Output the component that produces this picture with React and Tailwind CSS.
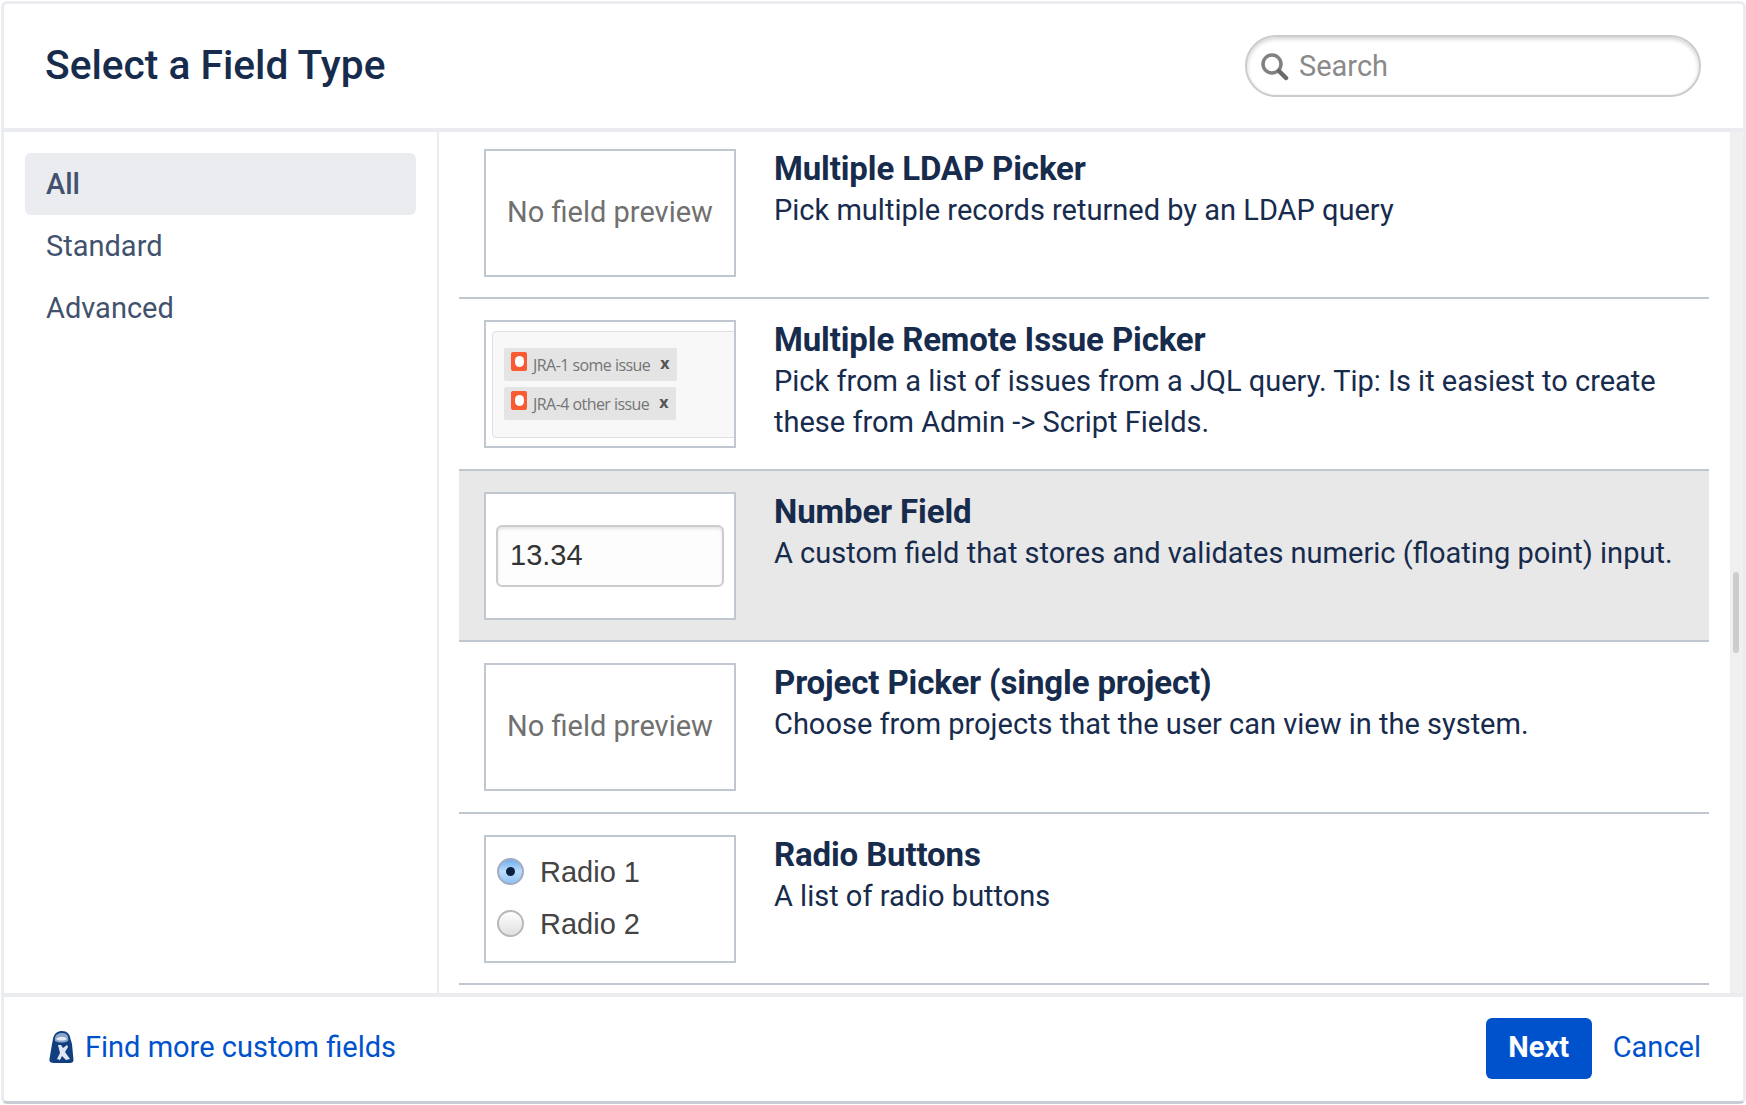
import React from 'react';

const rows = [
  { title: 'Multiple LDAP Picker', desc: 'Pick multiple records returned by an LDAP query', preview: 'none' },
  { title: 'Multiple Remote Issue Picker', desc: 'Pick from a list of issues from a JQL query. Tip: Is it easiest to create these from Admin -> Script Fields.', preview: 'tags' },
  { title: 'Number Field', desc: 'A custom field that stores and validates numeric (floating point) input.', preview: 'number', selected: true },
  { title: 'Project Picker (single project)', desc: 'Choose from projects that the user can view in the system.', preview: 'none' },
  { title: 'Radio Buttons', desc: 'A list of radio buttons', preview: 'radio' },
];

function SearchIcon() {
  return (
    <svg width="29" height="29" viewBox="0 0 29 29" className="shrink-0">
      <circle cx="12" cy="12" r="9" fill="#fff" stroke="#808080" strokeWidth="3.5" />
      <path d="M19 19 L26 26" stroke="#6a6a6a" strokeWidth="4.5" strokeLinecap="round" />
    </svg>
  );
}

function MarketIcon() {
  return (
    <svg width="25" height="34" viewBox="0 0 25 34" className="shrink-0 -mt-[3px]">
      <path d="M4 9 C5 3 9 1 13 1 C18 1 21 4 21.5 9 L23 14 L24.5 30 C24.5 32 23 33 21 33 L6 33 C2 33 0 32 0.5 29 L3 14 Z" fill="#123f80" />
      <path d="M6 11 C5 5 9 3 13 3 C18 3 20 6 19 11 C15 13 10 13 6 11 Z" fill="#8ba6ca" />
      <path d="M7 9 C10 6 16 6 18 9 C15 11 10 11 7 9 Z" fill="#e3eaf4" />
      <path d="M9 15 L12 15 L14 18 L18 15 L19 17 L16 22 L21 29 L17 30 L13 26 L11 30 L8 29 L11 23 Z" fill="#dfe7f2" />
    </svg>
  );
}

function Tag({ label, width }) {
  return (
    <div className={`flex items-center h-[33px] bg-[#e4e4e4] rounded-[2px] pl-[7px] font-['Open_Sans',sans-serif] text-[16px] tracking-[-0.55px] text-[#757575] ${width}`}>
      <span className="flex items-center justify-center w-[16px] h-[19px] -mt-[7px] rounded-[2px] bg-[#fa5a32]">
        <span className="w-[9px] h-[11px] rounded-full bg-white" />
      </span>
      <span className="ml-[6px] whitespace-nowrap">{label}</span>
      <span className="ml-auto mr-[8px] font-bold text-[16px] text-[#555] -mt-[3px]">x</span>
    </div>
  );
}

function Radio({ on }) {
  if (on) {
    return (
      <span className="flex items-center justify-center w-[27px] h-[27px] rounded-full border-2 border-[#a3acc0] bg-linear-to-b from-[#6fb0f0] via-[#bcdcfb] to-[#8cc4f6]">
        <span className="w-[9px] h-[9px] rounded-full bg-[#0b1f3f]" />
      </span>
    );
  }
  return <span className="w-[27px] h-[27px] rounded-full border-2 border-[#b8b8b8] bg-linear-to-b from-white to-[#e0e0e0]" />;
}

function Preview({ kind }) {
  return (
    <div className="relative shrink-0 w-[252px] h-[128px] box-border border-2 border-[#c1c7d0] bg-white overflow-hidden">
      {kind === 'none' && (
        <div className="flex items-center justify-center h-full text-[29px] text-[#707070]">No field preview</div>
      )}
      {kind === 'tags' && (
        <div className="ml-[6px] mt-[9px] h-[107px] w-[250px] box-border border border-[#dfdfdf] rounded-[4px] bg-[#f8f8f8] pl-[11px] pt-[16px] flex flex-col gap-[6px]">
          <Tag label="JRA-1 some issue" width="w-[173px]" />
          <Tag label="JRA-4 other issue" width="w-[172px]" />
        </div>
      )}
      {kind === 'number' && (
        <div className="flex items-center h-full pl-[10px]">
          <div className="flex items-center w-[228px] h-[62px] box-border border-2 border-[#cccccc] rounded-[6px] bg-[#fdfdfd] shadow-[inset_0_2px_3px_rgba(0,0,0,0.1)] pl-[12px] font-['Liberation_Sans',sans-serif] text-[29px] text-[#333]">
            13.34
          </div>
        </div>
      )}
      {kind === 'radio' && (
        <div className="flex flex-col gap-[25px] pl-[11px] pt-[21px] font-['Liberation_Sans',sans-serif] text-[29px] text-[#444]">
          <div className="flex items-center gap-[16px] h-[27px]"><Radio on /><span className="mt-[3px]">Radio 1</span></div>
          <div className="flex items-center gap-[16px] h-[27px]"><Radio /><span className="mt-[3px]">Radio 2</span></div>
        </div>
      )}
    </div>
  );
}

export default function App() {
  return (
    <div className="w-[1746px] h-[1105px] bg-white pt-px pl-px pb-px overflow-hidden font-['Roboto',sans-serif]">
      <div className="flex flex-col h-full box-border border-[3px] border-[#ebecf0] border-b-[#c8ccd4] rounded-[6px] bg-white">
        {/* Header */}
        <div className="flex items-center justify-between h-[128px] shrink-0 pl-[41px] pr-[42px] border-b-4 border-[#ebecf0]">
          <h1 className="text-[40.7px] font-medium text-[#172b4d]">Select a Field Type</h1>
          <div className="flex items-center w-[456px] h-[62px] box-border border-2 border-[#cccccc] rounded-full bg-white shadow-[inset_0_2px_4px_rgba(0,0,0,0.18)] pl-[13px]">
            <SearchIcon />
            <span className="ml-[10px] mt-[1px] text-[29px] text-[#8a8a8a]">Search</span>
          </div>
        </div>

        {/* Body */}
        <div className="flex flex-1 min-h-0">
          <div className="w-[435px] shrink-0 box-border border-r-2 border-[#ebecf0] pt-[21px] pl-[21px] pr-[21px] text-[29px] text-[#42526e]">
            <div className="flex items-center h-[62px] pl-[21px] pt-[1px] rounded-[6px] bg-[#ebecf0] font-medium">All</div>
            <div className="flex items-center h-[62px] pl-[21px] pt-[1px]">Standard</div>
            <div className="flex items-center h-[62px] pl-[21px] pt-[1px]">Advanced</div>
          </div>

          <div className="flex-1 min-w-0 pl-[20px] pr-[21px] overflow-hidden">
            {rows.map((row, i) => (
              <div
                key={row.title}
                className={`flex gap-[38px] box-border border-b-2 border-[#c1c7d0] pl-[25px] pr-[19px] ${i === 0 ? 'h-[167px] pt-[17px]' : 'h-[171.5px] pt-[21px]'} ${row.selected ? 'bg-[#e8e8e8]' : ''}`}
              >
                <Preview kind={row.preview} />
                <div className="min-w-0">
                  <div className="text-[33px] leading-[40px] font-bold text-[#172b4d] tracking-[-0.13px]">{row.title}</div>
                  <div className="mt-[1px] text-[29px] leading-[41px] text-[#172b4d]">{row.desc}</div>
                </div>
              </div>
            ))}
          </div>

          {/* Scrollbar */}
          <div className="w-[13px] shrink-0 bg-[#f0f0f0] pl-[3px] pt-[440px]">
            <div className="w-[6px] h-[81px] rounded-full bg-[#cdcdcd]" />
          </div>
        </div>

        {/* Footer */}
        <div className="flex items-center justify-between h-[108px] shrink-0 border-t-4 border-[#ebecf0] pl-[45px] pr-[42px] pb-[2px]">
          <a className="flex items-center gap-[11px] text-[29px] text-[#0052cc]">
            <MarketIcon />
            Find more custom fields
          </a>
          <div className="flex items-center gap-[21px]">
            <button className="w-[106px] h-[61px] rounded-[6px] bg-[#0052cc] text-white text-[29px] font-bold">Next</button>
            <a className="text-[29px] text-[#0052cc]">Cancel</a>
          </div>
        </div>
      </div>
    </div>
  );
}
